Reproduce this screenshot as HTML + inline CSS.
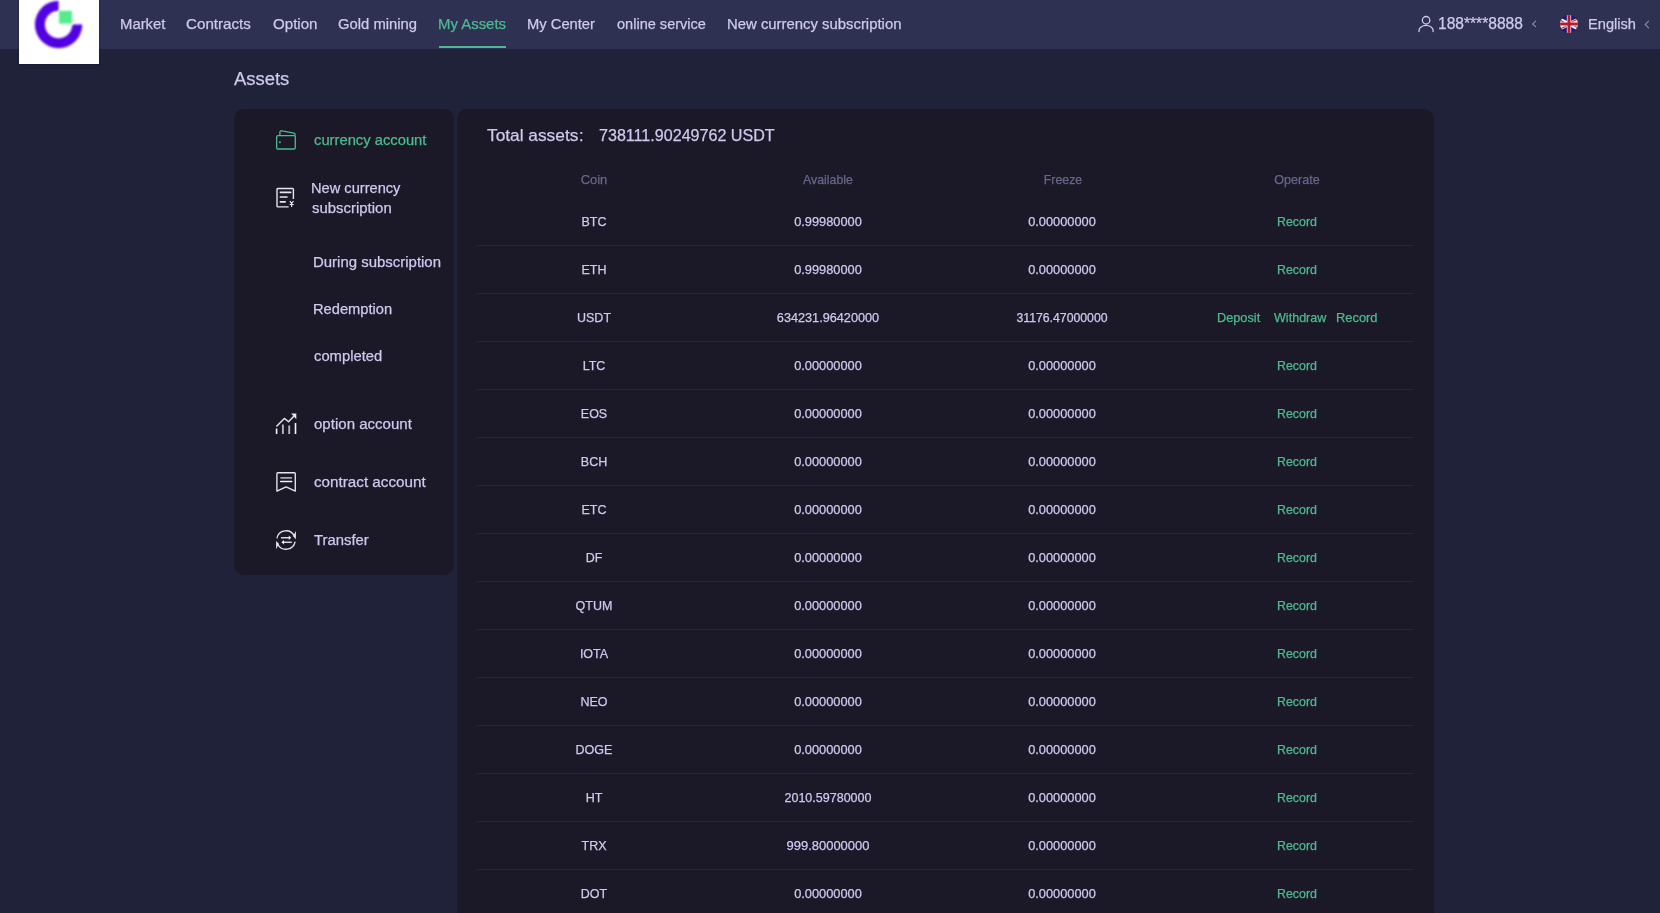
<!DOCTYPE html>
<html><head><meta charset="utf-8"><title>Assets</title>
<style>
*{margin:0;padding:0;box-sizing:border-box}
html,body{width:1660px;height:913px;overflow:hidden;background:#20223a;font-family:"Liberation Sans",sans-serif}
.t{position:absolute;white-space:nowrap;line-height:1;will-change:transform;-webkit-text-stroke:0.25px currentColor}
.c{text-align:center}
#hdr{position:absolute;left:0;top:0;width:1660px;height:49px;background:#2f3152}
#logo{position:absolute;left:19px;top:0;width:80px;height:64px;background:#fff;box-shadow:0 0 1.5px 0.5px rgba(10,10,30,0.7)}
#logo svg{position:absolute;left:0;top:0}
#uline{position:absolute;left:439px;top:46px;width:67px;height:2px;background:#4eba90}
#lp{position:absolute;left:234px;top:109px;width:220px;height:466px;background:#1b1927;border-radius:10px}
#rp{position:absolute;left:457px;top:109px;width:977px;height:900px;background:#1b1927;border-radius:10px}
.ln{position:absolute;left:477px;width:937px;height:1px;background:#25253b}
</style></head><body>
<div id="hdr"></div>
<div id="logo"><svg width="80" height="64" viewBox="19 0 80 64">
<defs><filter id="bl" x="-20%" y="-20%" width="140%" height="140%"><feGaussianBlur stdDeviation="0.9"/></filter></defs><g filter="url(#bl)"><path d="M58.6 0.8 A23.7 23.7 0 1 0 82.3 24.5 L72.3 24.5 A13.7 13.7 0 1 1 58.6 10.8 Z" fill="#5100e2"/>
<rect x="59" y="10.8" width="13" height="12.8" fill="#56ec8d"/></g>
</svg></div>
<div id="uline"></div>
<svg style="position:absolute;left:1416px;top:14px" width="20" height="20" viewBox="1416 14 20 20">
<circle cx="1426.1" cy="20.25" r="3.75" fill="none" stroke="#cfc9ef" stroke-width="1.3"/>
<path d="M1419 31.6 V30.4 A7 4.9 0 0 1 1433.1 30.4 V31.6" fill="none" stroke="#cfc9ef" stroke-width="1.3" stroke-linecap="round"/>
</svg>
<svg style="position:absolute;left:0;top:0;width:1660px;height:49px" viewBox="0 0 1660 49"><path d="M1535.6 21.2 L1532.6 24 L1535.6 26.7" fill="none" stroke="#8e8aae" stroke-width="1.1" stroke-linecap="round"/></svg>
<svg style="position:absolute;left:1560px;top:15px" width="18" height="18" viewBox="15 0 30 30">
<defs><clipPath id="fc"><circle cx="30" cy="15" r="15"/></clipPath>
<clipPath id="ft"><path d="M30,15 h30 v15 z v15 h-30 z h-30 v-15 z v-15 h30 z"/></clipPath></defs>
<g clip-path="url(#fc)">
<rect x="0" y="0" width="60" height="30" fill="#25137a"/>
<path d="M0,0 L60,30 M60,0 L0,30" stroke="#fff" stroke-width="6"/>
<path d="M0,0 L60,30 M60,0 L0,30" clip-path="url(#ft)" stroke="#b51d2c" stroke-width="4"/>
<path d="M30,0 v30 M0,15 h60" stroke="#fff" stroke-width="7.2"/>
<path d="M30,0 v30 M0,15 h60" stroke="#b51d2c" stroke-width="5"/>
</g></svg>
<svg style="position:absolute;left:0;top:0;width:1660px;height:49px" viewBox="0 0 1660 49"><path d="M1648.6 21.2 L1645.2 24.5 L1648.6 27.8" fill="none" stroke="#8e8aae" stroke-width="1.1" stroke-linecap="round"/></svg>
<div id="lp"></div>
<div id="rp"></div>
<div class="ln" style="top:245px"></div><div class="ln" style="top:293px"></div><div class="ln" style="top:341px"></div><div class="ln" style="top:389px"></div><div class="ln" style="top:437px"></div><div class="ln" style="top:485px"></div><div class="ln" style="top:533px"></div><div class="ln" style="top:581px"></div><div class="ln" style="top:629px"></div><div class="ln" style="top:677px"></div><div class="ln" style="top:725px"></div><div class="ln" style="top:773px"></div><div class="ln" style="top:821px"></div><div class="ln" style="top:869px"></div><div class="ln" style="top:917px"></div>

<svg style="position:absolute;left:272px;top:126px" width="28" height="28" viewBox="272 126 28 28">
<path d="M279.9 135.6 V132.2 Q280.1 130.5 281.8 130.8 L294 133.1 Q295.3 133.5 295.3 135.6" fill="none" stroke="#4eba90" stroke-width="1.3" stroke-linejoin="round"/>
<rect x="276.65" y="135.6" width="18.65" height="13.4" rx="1.2" fill="none" stroke="#4eba90" stroke-width="1.3"/>
<circle cx="279.9" cy="142.2" r="1" fill="#4eba90"/>
</svg>
<svg style="position:absolute;left:272px;top:184px" width="28" height="28" viewBox="272 184 28 28">
<path d="M293.4 199 V189.3 Q293.4 188.5 292.6 188.5 H277.8 Q277 188.5 277 189.3 V206.1 Q277 206.9 277.8 206.9 H288.6" fill="none" stroke="#e6e6ee" stroke-width="1.4"/>
<path d="M280.4 192.3 H290.7 M280.4 197 H286.9 M280.4 201.8 H285.2" stroke="#e6e6ee" stroke-width="1.7" stroke-linecap="round"/>
<path d="M289.8 201 L291.6 203.4 L293.5 201 M291.6 203.4 V206.9 M289.6 204.5 H293.8" fill="none" stroke="#e6e6ee" stroke-width="1.2"/>
</svg>
<svg style="position:absolute;left:272px;top:410px" width="28" height="28" viewBox="272 410 28 28">
<path d="M276.4 426.5 L284.3 418.4 L288.6 421.8 L295 415.1" fill="none" stroke="#e6e6ee" stroke-width="1.4" stroke-linejoin="round"/>
<path d="M291.2 413.6 H296.3 V419.2 Z" fill="#e6e6ee"/>
<path d="M276.6 428.4 V434 M295.5 423 V434" stroke="#f2f2f6" stroke-width="1.6"/>
<path d="M282.9 424.4 V434 M289.2 425.6 V434" stroke="#b4b4bc" stroke-width="1.9"/>
</svg>
<svg style="position:absolute;left:272px;top:468px" width="28" height="28" viewBox="272 468 28 28">
<path d="M276.9 491.1 V473.6 Q276.9 472.7 277.8 472.7 H294.4 Q295.3 472.7 295.3 473.6 V491.1 L286.1 486.9 Z" fill="none" stroke="#e6e6ee" stroke-width="1.35" stroke-linejoin="round"/>
<path d="M281 477.9 H291.4" stroke="#a9a9b2" stroke-width="1.6" stroke-linecap="round"/>
<path d="M280.6 481.5 H291.8" stroke="#f0f0f4" stroke-width="1.3" stroke-linecap="round"/>
</svg>
<svg style="position:absolute;left:272px;top:526px" width="28" height="28" viewBox="272 526 28 28">
<path d="M276.9 538.4 A9.2 9.2 0 0 1 294.3 536.1 M295.1 541.6 A9.2 9.2 0 0 1 277.7 543.9" fill="none" stroke="#e6e6ee" stroke-width="1.3"/>
<path d="M295.9 531 L295.9 539.3 L293.1 536.3 Z M276.1 541 L276.1 549.2 L278.9 543.8 Z" fill="#e6e6ee"/>
<path d="M281.6 537.7 H289.2 M291.3 542.3 H283.6" stroke="#d8d8de" stroke-width="1.6" stroke-linecap="round"/>
<path d="M288.8 535.4 L291.2 537.7 L288.8 540 Z M284 540 L281.4 542.3 L284 544.6 Z" fill="#f0f0f4"/>
</svg>

<div class="t" style="left:119.67px;top:16.98px;font-size:14.871px;color:#cfc9ef">Market</div><div class="t" style="left:186.49px;top:15.98px;font-size:15.187px;color:#cfc9ef">Contracts</div><div class="t" style="left:272.68px;top:15.95px;font-size:15.123px;color:#cfc9ef">Option</div><div class="t" style="left:338.28px;top:16.95px;font-size:14.823px;color:#cfc9ef">Gold mining</div><div class="t" style="left:438.21px;top:16.98px;font-size:14.932px;color:#4eba90">My Assets</div><div class="t" style="left:526.56px;top:17.05px;font-size:14.742px;color:#cfc9ef">My Center</div><div class="t" style="left:617.02px;top:16.99px;font-size:14.566px;color:#cfc9ef">online service</div><div class="t" style="left:727.34px;top:16.98px;font-size:14.890px;color:#cfc9ef">New currency subscription</div><div class="t" style="left:1438.21px;top:16.00px;font-size:15.593px;color:#cfc9ef">188****8888</div><div class="t" style="left:1587.83px;top:16.95px;font-size:14.643px;color:#cfc9ef">English</div><div class="t" style="left:234.33px;top:70.07px;font-size:18.436px;color:#cfc9ef">Assets</div><div class="t" style="left:313.80px;top:133.05px;font-size:14.786px;color:#4eba90">currency account</div><div class="t" style="left:311.42px;top:180.93px;font-size:14.642px;color:#cfc9ef">New currency</div><div class="t" style="left:312.30px;top:200.88px;font-size:14.952px;color:#cfc9ef">subscription</div><div class="t" style="left:313.37px;top:255.11px;font-size:14.960px;color:#cfc9ef">During subscription</div><div class="t" style="left:313.07px;top:302.04px;font-size:14.708px;color:#cfc9ef">Redemption</div><div class="t" style="left:313.90px;top:349.12px;font-size:14.792px;color:#cfc9ef">completed</div><div class="t" style="left:313.61px;top:415.93px;font-size:15.058px;color:#cfc9ef">option account</div><div class="t" style="left:314.16px;top:473.92px;font-size:15.236px;color:#cfc9ef">contract account</div><div class="t" style="left:313.65px;top:533.09px;font-size:14.850px;color:#cfc9ef">Transfer</div><div class="t" style="left:487.14px;top:126.91px;font-size:17.307px;color:#cfc9ef">Total assets</div><div class="t" style="left:579.40px;top:126.93px;font-size:16.500px;color:#cfc9ef">:</div><div class="t" style="left:599.14px;top:126.93px;font-size:16.106px;color:#cfc9ef">738111.90249762 USDT</div><div class="t c" style="left:393.94px;width:400px;top:173.88px;font-size:12.964px;color:#67678a">Coin</div><div class="t c" style="left:628.17px;width:400px;top:173.88px;font-size:12.344px;color:#67678a">Available</div><div class="t c" style="left:862.54px;width:400px;top:174.07px;font-size:12.312px;color:#67678a">Freeze</div><div class="t c" style="left:1096.96px;width:400px;top:173.97px;font-size:12.575px;color:#67678a">Operate</div><div class="t c" style="left:394.23px;width:400px;top:216.05px;font-size:12.507px;color:#cfc9ef">BTC</div><div class="t c" style="left:628.42px;width:400px;top:216.08px;font-size:12.818px;color:#cfc9ef">0.99980000</div><div class="t c" style="left:862.42px;width:400px;top:216.08px;font-size:12.818px;color:#cfc9ef">0.00000000</div><div class="t c" style="left:1096.88px;width:400px;top:215.97px;font-size:12.432px;color:#4eba90">Record</div><div class="t c" style="left:394.23px;width:400px;top:264.05px;font-size:12.507px;color:#cfc9ef">ETH</div><div class="t c" style="left:628.42px;width:400px;top:264.08px;font-size:12.818px;color:#cfc9ef">0.99980000</div><div class="t c" style="left:862.42px;width:400px;top:264.08px;font-size:12.818px;color:#cfc9ef">0.00000000</div><div class="t c" style="left:1096.88px;width:400px;top:263.97px;font-size:12.432px;color:#4eba90">Record</div><div class="t c" style="left:394.23px;width:400px;top:312.05px;font-size:12.507px;color:#cfc9ef">USDT</div><div class="t c" style="left:627.84px;width:400px;top:311.96px;font-size:12.691px;color:#cfc9ef">634231.96420000</div><div class="t c" style="left:862.48px;width:400px;top:312.05px;font-size:12.284px;color:#cfc9ef">31176.47000000</div><div class="t" style="left:1216.70px;top:312.11px;font-size:12.742px;color:#4eba90">Deposit</div><div class="t" style="left:1273.88px;top:312.08px;font-size:12.579px;color:#4eba90">Withdraw</div><div class="t" style="left:1335.58px;top:312.08px;font-size:12.894px;color:#4eba90">Record</div><div class="t c" style="left:394.23px;width:400px;top:360.05px;font-size:12.507px;color:#cfc9ef">LTC</div><div class="t c" style="left:628.42px;width:400px;top:360.08px;font-size:12.818px;color:#cfc9ef">0.00000000</div><div class="t c" style="left:862.42px;width:400px;top:360.08px;font-size:12.818px;color:#cfc9ef">0.00000000</div><div class="t c" style="left:1096.88px;width:400px;top:359.97px;font-size:12.432px;color:#4eba90">Record</div><div class="t c" style="left:394.23px;width:400px;top:408.05px;font-size:12.507px;color:#cfc9ef">EOS</div><div class="t c" style="left:628.42px;width:400px;top:408.08px;font-size:12.818px;color:#cfc9ef">0.00000000</div><div class="t c" style="left:862.42px;width:400px;top:408.08px;font-size:12.818px;color:#cfc9ef">0.00000000</div><div class="t c" style="left:1096.88px;width:400px;top:407.97px;font-size:12.432px;color:#4eba90">Record</div><div class="t c" style="left:394.23px;width:400px;top:456.05px;font-size:12.507px;color:#cfc9ef">BCH</div><div class="t c" style="left:628.42px;width:400px;top:456.08px;font-size:12.818px;color:#cfc9ef">0.00000000</div><div class="t c" style="left:862.42px;width:400px;top:456.08px;font-size:12.818px;color:#cfc9ef">0.00000000</div><div class="t c" style="left:1096.88px;width:400px;top:455.97px;font-size:12.432px;color:#4eba90">Record</div><div class="t c" style="left:394.23px;width:400px;top:504.05px;font-size:12.507px;color:#cfc9ef">ETC</div><div class="t c" style="left:628.42px;width:400px;top:504.08px;font-size:12.818px;color:#cfc9ef">0.00000000</div><div class="t c" style="left:862.42px;width:400px;top:504.08px;font-size:12.818px;color:#cfc9ef">0.00000000</div><div class="t c" style="left:1096.88px;width:400px;top:503.97px;font-size:12.432px;color:#4eba90">Record</div><div class="t c" style="left:394.23px;width:400px;top:552.05px;font-size:12.507px;color:#cfc9ef">DF</div><div class="t c" style="left:628.42px;width:400px;top:552.08px;font-size:12.818px;color:#cfc9ef">0.00000000</div><div class="t c" style="left:862.42px;width:400px;top:552.08px;font-size:12.818px;color:#cfc9ef">0.00000000</div><div class="t c" style="left:1096.88px;width:400px;top:551.97px;font-size:12.432px;color:#4eba90">Record</div><div class="t c" style="left:394.23px;width:400px;top:600.05px;font-size:12.507px;color:#cfc9ef">QTUM</div><div class="t c" style="left:628.42px;width:400px;top:600.08px;font-size:12.818px;color:#cfc9ef">0.00000000</div><div class="t c" style="left:862.42px;width:400px;top:600.08px;font-size:12.818px;color:#cfc9ef">0.00000000</div><div class="t c" style="left:1096.88px;width:400px;top:599.97px;font-size:12.432px;color:#4eba90">Record</div><div class="t c" style="left:394.23px;width:400px;top:648.05px;font-size:12.507px;color:#cfc9ef">IOTA</div><div class="t c" style="left:628.42px;width:400px;top:648.08px;font-size:12.818px;color:#cfc9ef">0.00000000</div><div class="t c" style="left:862.42px;width:400px;top:648.08px;font-size:12.818px;color:#cfc9ef">0.00000000</div><div class="t c" style="left:1096.88px;width:400px;top:647.97px;font-size:12.432px;color:#4eba90">Record</div><div class="t c" style="left:394.23px;width:400px;top:696.05px;font-size:12.507px;color:#cfc9ef">NEO</div><div class="t c" style="left:628.42px;width:400px;top:696.08px;font-size:12.818px;color:#cfc9ef">0.00000000</div><div class="t c" style="left:862.42px;width:400px;top:696.08px;font-size:12.818px;color:#cfc9ef">0.00000000</div><div class="t c" style="left:1096.88px;width:400px;top:695.97px;font-size:12.432px;color:#4eba90">Record</div><div class="t c" style="left:394.23px;width:400px;top:744.05px;font-size:12.507px;color:#cfc9ef">DOGE</div><div class="t c" style="left:628.42px;width:400px;top:744.08px;font-size:12.818px;color:#cfc9ef">0.00000000</div><div class="t c" style="left:862.42px;width:400px;top:744.08px;font-size:12.818px;color:#cfc9ef">0.00000000</div><div class="t c" style="left:1096.88px;width:400px;top:743.97px;font-size:12.432px;color:#4eba90">Record</div><div class="t c" style="left:394.23px;width:400px;top:792.05px;font-size:12.507px;color:#cfc9ef">HT</div><div class="t c" style="left:628.08px;width:400px;top:792.10px;font-size:12.526px;color:#cfc9ef">2010.59780000</div><div class="t c" style="left:862.42px;width:400px;top:792.08px;font-size:12.818px;color:#cfc9ef">0.00000000</div><div class="t c" style="left:1096.88px;width:400px;top:791.97px;font-size:12.432px;color:#4eba90">Record</div><div class="t c" style="left:394.23px;width:400px;top:840.05px;font-size:12.507px;color:#cfc9ef">TRX</div><div class="t c" style="left:628.07px;width:400px;top:839.98px;font-size:12.963px;color:#cfc9ef">999.80000000</div><div class="t c" style="left:862.42px;width:400px;top:840.08px;font-size:12.818px;color:#cfc9ef">0.00000000</div><div class="t c" style="left:1096.88px;width:400px;top:839.97px;font-size:12.432px;color:#4eba90">Record</div><div class="t c" style="left:394.23px;width:400px;top:888.05px;font-size:12.507px;color:#cfc9ef">DOT</div><div class="t c" style="left:628.42px;width:400px;top:888.08px;font-size:12.818px;color:#cfc9ef">0.00000000</div><div class="t c" style="left:862.42px;width:400px;top:888.08px;font-size:12.818px;color:#cfc9ef">0.00000000</div><div class="t c" style="left:1096.88px;width:400px;top:887.97px;font-size:12.432px;color:#4eba90">Record</div>
</body></html>
